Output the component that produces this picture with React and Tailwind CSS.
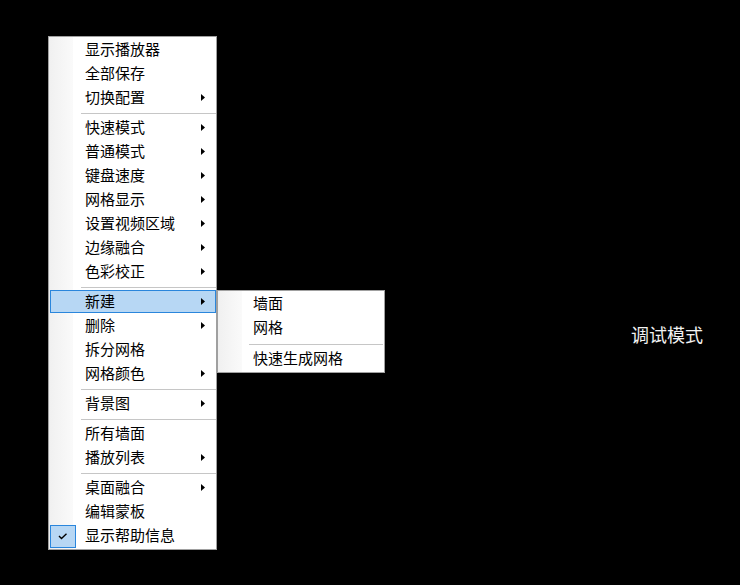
import React from "react";

const Arrow = () => (
  <svg className="absolute right-[11px] top-[8px]" width="4" height="7" viewBox="0 0 4 7">
    <polygon points="0,0 4,3.5 0,7" fill="#000" />
  </svg>
);

const Check = () => (
  <svg width="10" height="7" viewBox="0 0 10 7">
    <polyline points="1,3 3.5,5.5 8.5,0.8" fill="none" stroke="#000" strokeWidth="1.4" />
  </svg>
);

function Item({ label, arrow, active, checked, pl = "pl-[36px]" }) {
  return (
    <div className={`relative h-[24px] flex items-center ${pl} text-[15px] leading-[24px] text-black`}>
      {active && (
        <div className="absolute left-[1px] right-0 top-0 bottom-[1px] bg-[#b7d7f4] border border-[#2a86dc]" />
      )}
      {checked && (
        <div className="absolute left-[1px] top-[1px] w-[26px] h-[23px] bg-[#b7d7f4] border border-[#2a86dc] flex items-center justify-center">
          <Check />
        </div>
      )}
      <span className="relative -top-px whitespace-nowrap">{label}</span>
      {arrow && <Arrow />}
    </div>
  );
}

const Sep = ({ sub }) =>
  sub ? (
    <div className="h-[7px] pt-[4px]">
      <div className="h-px bg-[#c6c6c6] ml-[31px] mr-[1px]" />
    </div>
  ) : (
    <div className="h-[6px] pt-[3px]">
      <div className="h-px bg-[#c6c6c6] ml-[32px]" />
    </div>
  );

const groups = [
  [
    ["显示播放器"],
    ["全部保存"],
    ["切换配置", true],
  ],
  [
    ["快速模式", true],
    ["普通模式", true],
    ["键盘速度", true],
    ["网格显示", true],
    ["设置视频区域", true],
    ["边缘融合", true],
    ["色彩校正", true],
  ],
  [
    ["新建", true, true],
    ["删除", true],
    ["拆分网格"],
    ["网格颜色", true],
  ],
  [["背景图", true]],
  [
    ["所有墙面"],
    ["播放列表", true],
  ],
  [
    ["桌面融合", true],
    ["编辑蒙板"],
    ["显示帮助信息", false, false, true],
  ],
];

export default function App() {
  return (
    <div
      className="relative w-[740px] h-[585px] bg-black overflow-hidden"
      style={{ fontFamily: '"Noto Sans CJK SC", "Noto Sans", sans-serif' }}
    >
      <div className="absolute left-[48px] top-[36px] w-[169px] border border-[#a0a0a0] py-[1px] bg-[linear-gradient(to_right,#f0f0f0_0px,#fafafa_24px,#ffffff_24px)]">
        {groups.map((g, gi) => (
          <React.Fragment key={gi}>
            {gi > 0 && <Sep />}
            {g.map(([label, arrow, active, checked]) => (
              <Item key={label} label={label} arrow={arrow} active={active} checked={checked} />
            ))}
          </React.Fragment>
        ))}
      </div>

      <div className="absolute left-[217px] top-[290px] w-[168px] border border-[#a0a0a0] py-[1px] bg-[linear-gradient(to_right,#f0f0f0_0px,#fafafa_24px,#ffffff_24px)]">
        <Item label="墙面" pl="pl-[35px]" />
        <Item label="网格" pl="pl-[35px]" />
        <Sep sub />
        <Item label="快速生成网格" pl="pl-[35px]" />
      </div>

      <div className="absolute left-[631px] top-[321px] text-[18px] leading-[26px] text-[#f2f2f2] whitespace-nowrap">
        调试模式
      </div>
    </div>
  );
}
